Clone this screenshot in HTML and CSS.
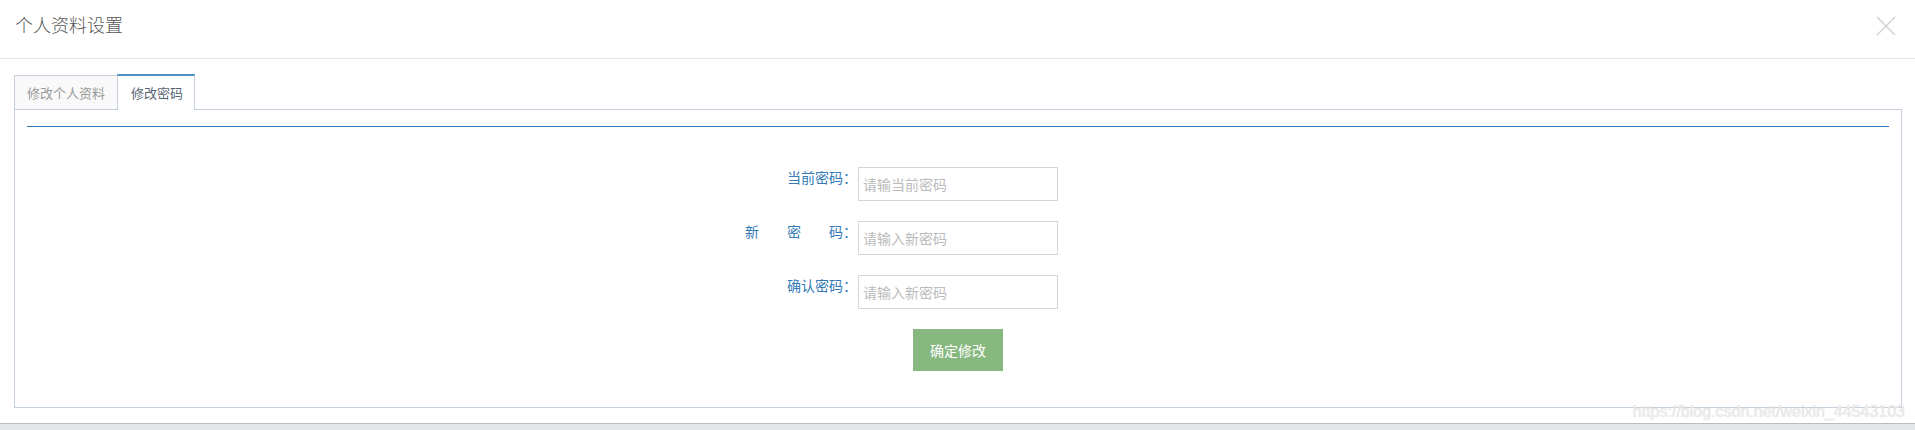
FILE: index.html
```html
<!DOCTYPE html>
<html lang="zh-CN">
<head>
<meta charset="utf-8">
<title>个人资料设置</title>
<link rel="stylesheet" href="styles.css">
</head>
<body>
<div class="modal">
  <div class="modal-header">
    <h4 class="modal-title">个人资料设置</h4>
    <span class="close" aria-label="关闭">
      <svg width="20" height="20" viewBox="0 0 20 20"><path d="M1 1 L19 19 M19 1 L1 19" stroke="#d2d2d2" stroke-width="1.5" fill="none"/></svg>
    </span>
  </div>
  <div class="modal-body">
    <ul class="tabs">
      <li class="tab">修改个人资料</li>
      <li class="tab active">修改密码</li>
    </ul>
    <div class="tab-pane">
      <div class="divider"></div>
      <form class="pwd-form">
        <label class="lbl">当前密码：</label>
        <input class="ipt" type="password" placeholder="请输当前密码">
        <span></span>
        <label class="lbl">新<span class="gap"></span>密<span class="gap"></span>码：</label>
        <input class="ipt" type="password" placeholder="请输入新密码">
        <span></span>
        <label class="lbl">确认密码：</label>
        <input class="ipt" type="password" placeholder="请输入新密码">
        <span></span>
        <span></span>
        <button class="btn-ok" type="button">确定修改</button>
        <span></span>
      </form>
    </div>
  </div>
  <div class="footer-strip"></div>
  <div class="watermark">https://blog.csdn.net/weixin_44543103</div>
</div>
</body>
</html>
```
FILE: styles.css
```css
html, body {
  margin: 0;
  padding: 0;
  background: #fff;
}
body {
  font-family: "Noto Sans CJK SC", "Liberation Sans", sans-serif;
  font-size: 14px;
  color: #393939;
}
.modal {
  position: relative;
  width: 1915px;
  height: 430px;
  overflow: hidden;
}
.modal-header {
  position: relative;
  box-sizing: border-box;
  height: 59px;
  padding: 12px 15px 0;
  border-bottom: 1px solid #e5e5e5;
}
.modal-title {
  margin: 0;
  font-size: 18px;
  font-weight: 300;
  line-height: 24px;
  color: #555;
}
.close {
  position: absolute;
  right: 19px;
  top: 16px;
  width: 20px;
  height: 20px;
  display: block;
}
.close svg { display: block; }
.modal-body {
  padding: 15px 13px 0 14px;
}
.tabs {
  display: flex;
  align-items: flex-end;
  list-style: none;
  margin: 0;
  padding: 0;
  height: 35px;
  position: relative;
  z-index: 1;
}
.tab {
  box-sizing: border-box;
  height: 34px;
  line-height: 33px;
  padding: 0 12px;
  border: 1px solid #c5d0dc;
  border-bottom: none;
  background: #f9f9f9;
  color: #999;
  font-size: 13px;
}
.tab.active {
  height: 36px;
  margin-left: -1px;
  margin-bottom: -1px;
  padding: 0 11px 0 13px;
  border-top: 2px solid #4c8fbd;
  background: #fff;
  color: #576373;
  line-height: 33px;
}
.tab-pane {
  border: 1px solid #c5d0dc;
  padding: 16px 12px 36px;
}
.divider {
  height: 0;
  border-top: 1px solid #307ac0;
  margin-bottom: 40px;
}
.pwd-form {
  display: grid;
  grid-template-columns: 1fr 200px 1fr;
  row-gap: 20px;
  margin: 0;
}
.lbl {
  justify-self: end;
  align-self: start;
  line-height: 20px;
  padding-right: 1px;
  color: #337ab7;
  font-size: 14px;
  white-space: nowrap;
}
.gap {
  display: inline-block;
  width: 28px;
}
.ipt {
  box-sizing: border-box;
  width: 200px;
  height: 34px;
  margin: 0;
  padding: 5px 4px;
  border: 1px solid #d5d5d5;
  border-radius: 0;
  font-family: "Noto Sans CJK SC", "Liberation Sans", sans-serif;
  font-size: 14px;
  color: #555;
  outline: none;
}
.ipt::placeholder {
  color: #bbb;
}
.btn-ok {
  justify-self: center;
  width: 90px;
  height: 42px;
  border: 0;
  padding: 0;
  background: #87b87f;
  color: #fff;
  font-family: "Noto Sans CJK SC", "Liberation Sans", sans-serif;
  font-size: 14px;
}
.footer-strip {
  position: absolute;
  left: 0;
  right: 0;
  bottom: 0;
  height: 6px;
  border-top: 1px solid #bcbcbc;
  background: #e4e6e9;
}
.watermark {
  position: absolute;
  right: 10px;
  top: 403px;
  font-family: "Liberation Sans", Arial, sans-serif;
  font-size: 16px;
  line-height: 18px;
  color: #ececec;
  text-shadow: 0 0 1px #d4d4d4;
}
```
